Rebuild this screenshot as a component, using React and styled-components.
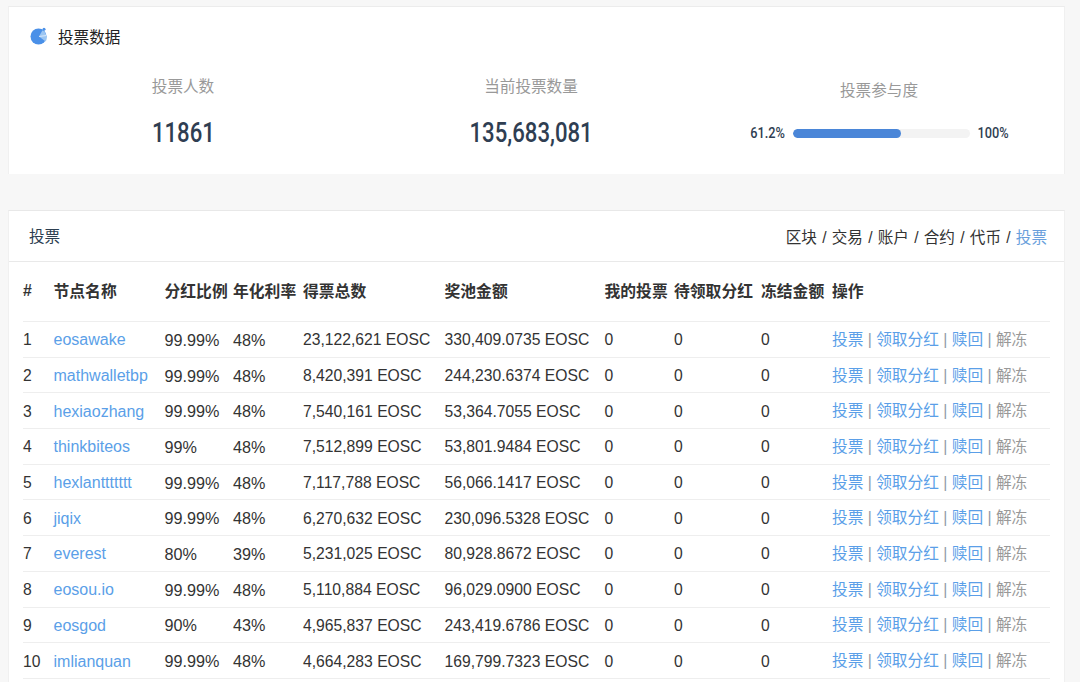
import React from "react";
import styled, { createGlobalStyle } from "styled-components";

const nodes = [
  ["eosawake", "99.99%", "48%", "23,122,621 EOSC", "330,409.0735 EOSC"],
  ["mathwalletbp", "99.99%", "48%", "8,420,391 EOSC", "244,230.6374 EOSC"],
  ["hexiaozhang", "99.99%", "48%", "7,540,161 EOSC", "53,364.7055 EOSC"],
  ["thinkbiteos", "99%", "48%", "7,512,899 EOSC", "53,801.9484 EOSC"],
  ["hexlanttttttt", "99.99%", "48%", "7,117,788 EOSC", "56,066.1417 EOSC"],
  ["jiqix", "99.99%", "48%", "6,270,632 EOSC", "230,096.5328 EOSC"],
  ["everest", "80%", "39%", "5,231,025 EOSC", "80,928.8672 EOSC"],
  ["eosou.io", "99.99%", "48%", "5,110,884 EOSC", "96,029.0900 EOSC"],
  ["eosgod", "90%", "43%", "4,965,837 EOSC", "243,419.6786 EOSC"],
  ["imlianquan", "99.99%", "48%", "4,664,283 EOSC", "169,799.7323 EOSC"],
];

const columns = [
  ["#", 30.5],
  ["节点名称", 111],
  ["分红比例", 68.5],
  ["年化利率", 70],
  ["得票总数", 141.5],
  ["奖池金额", 160],
  ["我的投票", 69.5],
  ["待领取分红", 87],
  ["冻结金额", 71],
  ["操作", 218],
];

const crumbs = ["区块", "交易", "账户", "合约", "代币"];

function PieIcon() {
  return (
    <svg width="18" height="18" viewBox="0 0 18 18">
      <circle cx="8.5" cy="9.5" r="8" fill="#4a90e8" />
      <path d="M9 9.5 L12.5 3.2 A8 8 0 0 1 15.6 14.5 Z" fill="#9cc6f2" />
      <path d="M9 9.5 L16.4 8.5" stroke="#e6f0fb" strokeWidth="0.8" />
      <circle cx="14" cy="2.2" r="1.5" fill="#4a90e8" />
    </svg>
  );
}

export default function App() {
  return (
    <Page>
      <GlobalStyle />
      <StatsCard>
        <StatsTitle>
          <PieIcon />
          投票数据
        </StatsTitle>
        <StatsRow>
          <Stat>
            <StatLabel>投票人数</StatLabel>
            <StatValue>11861</StatValue>
          </Stat>
          <Stat>
            <StatLabel>当前投票数量</StatLabel>
            <StatValue>135,683,081</StatValue>
          </Stat>
          <Stat>
            <StatLabel $low>投票参与度</StatLabel>
            <Progress>
              <ProgressText $width={35}>61.2%</ProgressText>
              <Track>
                <Fill style={{ width: "61.2%" }} />
              </Track>
              <ProgressText $width={30}>100%</ProgressText>
            </Progress>
          </Stat>
        </StatsRow>
      </StatsCard>

      <VoteCard>
        <VoteHeader>
          <VoteTitle>投票</VoteTitle>
          <Crumbs>
            {crumbs.map((c) => (
              <span key={c}>{c} / </span>
            ))}
            <CrumbActive>投票</CrumbActive>
          </Crumbs>
        </VoteHeader>
        <TableWrap>
          <Table>
            <colgroup>
              {columns.map(([name, width]) => (
                <col key={name} style={{ width }} />
              ))}
            </colgroup>
            <thead>
              <tr>
                {columns.map(([name]) => (
                  <Th key={name}>{name}</Th>
                ))}
              </tr>
            </thead>
            <tbody>
              {nodes.map((n, i) => (
                <tr key={n[0]}>
                  <Td>{i + 1}</Td>
                  <Td>
                    <NodeLink>{n[0]}</NodeLink>
                  </Td>
                  <Td>
                    <Percent>{n[1]}</Percent>
                  </Td>
                  <Td>
                    <Percent>{n[2]}</Percent>
                  </Td>
                  <Td>{n[3]}</Td>
                  <Td>{n[4]}</Td>
                  <Td>0</Td>
                  <Td>0</Td>
                  <Td>0</Td>
                  <ActionTd>
                    <Link>投票</Link>
                    <Sep> | </Sep>
                    <Link>领取分红</Link>
                    <Sep> | </Sep>
                    <Link>赎回</Link>
                    <Sep> | </Sep>
                    <Muted>解冻</Muted>
                  </ActionTd>
                </tr>
              ))}
            </tbody>
          </Table>
        </TableWrap>
      </VoteCard>
    </Page>
  );
}

const GlobalStyle = createGlobalStyle`
  html, body {
    margin: 0;
    overflow: hidden;
    background: #f7f7f7;
  }
  body {
    font-family: "Liberation Sans", "Noto Sans CJK SC", sans-serif;
    color: #333;
  }
`;
const Page = styled.div`
  width: 1080px;
  height: 682px;
  overflow: hidden;
  padding: 6px 15px 0 8px;
  box-sizing: border-box;
`;
const StatsCard = styled.section`
  height: 168px;
  box-sizing: border-box;
  background: #fff;
  border-top: 1px solid #ececec;
  border-left: 1px solid #f0f0f0;
  border-right: 1px solid #f0f0f0;
`;
const StatsTitle = styled.h2`
  display: flex;
  align-items: center;
  gap: 10px;
  margin: 0;
  padding: 19px 0 0 21px;
  height: 19px;
  font-size: 15.6px;
  font-weight: 400;
  color: #222;
`;
const StatsRow = styled.div`
  display: grid;
  grid-template-columns: repeat(3, 1fr);
  padding-right: 11px;
`;
const Stat = styled.div`
  display: flex;
  flex-direction: column;
  align-items: center;
`;
const StatLabel = styled.div`
  margin-top: ${(p) => (p.$low ? "36px" : "32px")};
  height: ${(p) => (p.$low ? "37px" : "41px")};
  font-size: 15.6px;
  line-height: 20px;
  color: #999;
`;
const StatValue = styled.div`
  font-family: "Roboto", sans-serif;
  font-size: 27px;
  line-height: 30px;
  font-weight: 500;
  color: #2f3e52;
  transform: scaleX(0.82);
`;
const Progress = styled.div`
  display: flex;
  align-items: center;
  gap: 8px;
  height: 30px;
`;
const ProgressText = styled.span`
  width: ${(p) => p.$width}px;
  display: flex;
  justify-content: center;
  font-family: "Roboto", sans-serif;
  font-size: 14.5px;
  font-weight: 500;
  color: #2f3e52;
  white-space: nowrap;
  transform: scaleX(0.88);
`;
const Track = styled.div`
  width: 177px;
  height: 9px;
  border-radius: 5px;
  background: #f3f3f3;
  overflow: hidden;
`;
const Fill = styled.div`
  height: 100%;
  border-radius: 5px;
  background: #4a86d8;
`;
const VoteCard = styled.section`
  margin-top: 36px;
  height: 500px;
  background: #fff;
  border-top: 1px solid #e8e8e8;
  border-left: 1px solid #f0f0f0;
  border-right: 1px solid #f0f0f0;
`;
const VoteHeader = styled.header`
  display: flex;
  justify-content: space-between;
  align-items: center;
  height: 50px;
  padding: 0 17px 0 20px;
  border-bottom: 1px solid #e9e9e9;
`;
const VoteTitle = styled.h3`
  margin: 0 0 2px;
  font-size: 15.6px;
  font-weight: 400;
  color: #2c3e50;
`;
const Crumbs = styled.div`
  font-size: 15.6px;
  color: #333;
  white-space: pre-wrap;
  word-spacing: 0.9px;
`;
const CrumbActive = styled.span`
  color: #6a9fdc;
`;
const TableWrap = styled.div`
  padding: 0 14px 0 14px;
`;
const Table = styled.table`
  width: 1027px;
  table-layout: fixed;
  border-collapse: collapse;
`;
const Th = styled.th`
  height: 57px;
  padding: 0 0 2px;
  text-align: left;
  vertical-align: middle;
  font-size: 15.8px;
  font-weight: 700;
  color: #333;
  white-space: nowrap;
`;
const Td = styled.td`
  height: 32.7px;
  padding: 2px 0 0;
  border-top: 1px solid #eee;
  font-size: 15.7px;
  color: #333;
  white-space: nowrap;
  tr:last-child & {
    border-bottom: 1px solid #eee;
  }
`;
const ActionTd = styled(Td)`
  padding: 0 0 2px;
`;
const Percent = styled.span`
  font-size: 16.2px;
`;
const Link = styled.a`
  color: #5b9fe8;
`;
const NodeLink = styled(Link)`
  font-size: 16px;
`;
const Sep = styled.span`
  color: #8f9aa6;
`;
const Muted = styled.span`
  color: #999;
`;
